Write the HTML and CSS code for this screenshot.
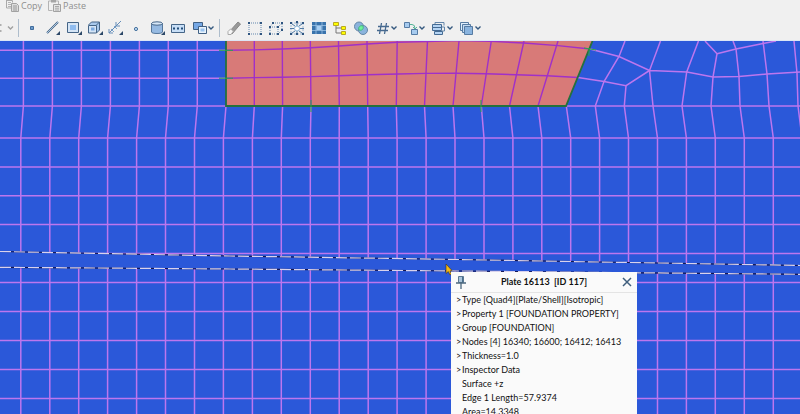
FILE: index.html
```
<!DOCTYPE html>
<html lang="en">
<head>
<meta charset="utf-8">
<title>Plate model</title>
<link rel="stylesheet" href="styles.css">
</head>
<body>
<header class="toolbar">
  <div class="clipboard">
    <button class="clip" type="button">
      <svg width="13" height="12" viewBox="0 0 13 12"><path d="M.5 0v8h5M.5.5h6v2" fill="none" stroke="#aaa"/><path d="M2 2.500h3M2 4.500h3M2 6.500h3" stroke="#b5b5b5"/><path d="M5.500 3.500h5l2 2v6h-7z" fill="#ddd" stroke="#a2a2a2"/><path d="M7 6h4M7 8h4M7 10h4" stroke="#999"/></svg>
      Copy</button>
    <button class="clip" type="button">
      <svg width="13" height="12" viewBox="0 0 13 12"><path d="M.5 1h10v3M.5 1v9.500h4" fill="none" stroke="#b4b4b4"/><path d="M3 0h5v2.500H3z" fill="#a6a6a6"/><path d="M5.500 4.500h7v7h-7z" fill="#e5e5e5" stroke="#a2a2a2"/><path d="M7 6.500h4M7 8.200h4M7 10h4" stroke="#aaa"/></svg>
      Paste</button>
  </div>
  <div class="tools">
    <button class="lead" type="button" aria-label="Undo history">
      <svg width="16" height="18" viewBox="0 0 16 18"><path d="M0 6h1.500M0 12h1.500" stroke="#999" stroke-width="1.500"/><path class="chev dim" d="M8 7.500l2.500 2.500L13 7.500"/></svg></button>
    <i class="sep"></i>
    <div class="group create">
      <button type="button" aria-label="Node"><svg viewBox="0 0 18 18"><path d="M7.500 7.500h3v3h-3z" fill="#6d9ccb" stroke="#416c9c"/></svg></button>
      <button type="button" aria-label="Beam"><svg viewBox="0 0 18 18"><path d="M3 14L14 3" stroke="#416184" stroke-width="2"/><path d="M3 14L14 3" stroke="#a9c5df"/><path class="corner" d="M16 12v4h-4z"/></svg></button>
      <button type="button" aria-label="Plate"><svg viewBox="0 0 18 18"><path d="M2.500 3.500h11v10h-11z" fill="#d5e5f6" stroke="#456587"/><path d="M5 6h6v5H5z" fill="#8fbcf0"/><path class="corner" d="M17 12v4h-4z"/></svg></button>
      <button type="button" aria-label="Brick"><svg viewBox="0 0 18 18"><path d="M2.500 6l3-3h8v8l-3 3" fill="#a9c9ec" stroke="#456587"/><path d="M2.500 6.500h8v7.500h-8z" fill="#d5e5f6" stroke="#456587"/><path d="M10.500 6l3-3" stroke="#456587"/><path d="M5 8.500h3.500v3H5z" fill="#7caae0"/><path class="corner" d="M17 12v4h-4z"/></svg></button>
      <button type="button" aria-label="Link"><svg viewBox="0 0 18 18"><path d="M3 14L13 4M3 10v4h4M10 3v4h4M13 4l2-2" fill="none" stroke="#648db9"/><path d="M5 10l3 3M8 7l3 3" stroke="#7da4ca"/><path class="corner" d="M17 12v4h-4z"/></svg></button>
      <button type="button" aria-label="Vertex"><svg viewBox="0 0 18 18"><circle cx="9" cy="10" r="1.600" fill="#bdd7f0" stroke="#46739f"/></svg></button>
      <button type="button" aria-label="Face"><svg viewBox="0 0 18 18"><path d="M3.500 4v9c0 2 11 2 11 0V4" fill="#96bae2" stroke="#55779b"/><ellipse cx="9" cy="4.500" rx="5.500" ry="1.700" fill="#d7e7f7" stroke="#456587"/><path class="corner" d="M17 12v4h-4z"/></svg></button>
      <button type="button" aria-label="Attributes"><svg viewBox="0 0 18 18"><path d="M2.500 5.500h13v8h-13z" fill="#c7def6" stroke="#456587"/><path d="M4 9.500h2M8 9.500h2M12 9.500h2" stroke="#234d79" stroke-width="2"/></svg></button>
    </div>
    <button class="split" type="button" aria-label="Copy elements">
      <svg width="16" height="18" viewBox="0 0 16 18"><path d="M1.500 3.500h9v7h-9z" fill="#76a8e5" stroke="#416184"/><path d="M6.500 7.500h8v7h-8z" fill="#e9f3fc" stroke="#416184"/><path d="M8.500 9.500h4v3h-4z" fill="#9bc4f1"/></svg><svg width="6" height="18" viewBox="0 0 6 18"><path class="chev" d="M.5 7.500L3 10l2.500-2.500"/></svg></button>
    <i class="sep"></i>
    <div class="group select">
      <button type="button" aria-label="Erase"><svg viewBox="0 0 18 18"><path d="M4 13l9-10 2.500 2-8.500 10z" fill="#999" stroke="#888"/><path d="M3 12.500l2.500-2.500 3 2-2.500 3.500H3z" fill="#f6f6f6" stroke="#aaa"/></svg></button>
      <button type="button" aria-label="Select by window"><svg viewBox="0 0 18 18"><path class="dots" d="M3 4h12M3 15h12M3 4v11M15 4v11"/><path class="knots" d="M3 4h0M15 4h0M3 15h0M15 15h0"/></svg></button>
      <button type="button" aria-label="Select by volume"><svg viewBox="0 0 18 18"><path class="dots" d="M3 8h8v7H3zM6 4h9v7M3 8l3-4M11 8l4-4M11 15l4-4"/><path class="knots" d="M3 8h0M11 8h0M3 15h0M11 15h0M6 4h0M15 4h0M15 11h0"/></svg></button>
      <button type="button" aria-label="Select connected"><svg viewBox="0 0 18 18"><path d="M3 4h12v11H3z" fill="none" stroke="#9eb9d5" stroke-dasharray="2 1"/><path d="M9 3v4M9 12v3M2 9.500h4M12 9.500h4M4 5l3 2M14 5l-3 2M4 14l3-2M14 14l-3-2" stroke="#527ba5"/><circle cx="9" cy="9.500" r="2.500" fill="#fff" stroke="#89b5d8"/><path class="knots" d="M3 4h0M15 4h0M3 15h0M15 15h0M9 3h0M9 15h0"/></svg></button>
      <button type="button" aria-label="Select all"><svg viewBox="0 0 18 18"><path d="M2 3h14v12H2z" fill="#3973ac"/><path d="M6 3v12M12 3v12M2 6.500h14M2 11.500h14" stroke="#9cc1e3" stroke-width=".8"/><path d="M6.500 7h5v4h-5z" fill="#a8cff2"/></svg></button>
      <button type="button" aria-label="Groups"><svg viewBox="0 0 18 18"><path d="M5 6v8h6M5 9h6" fill="none" stroke="#777"/><path d="M2.500 3.500h5v3h-5zM10.500 7.500h4v3h-4zM10.500 12.500h4v3h-4z" fill="#ff0" stroke="#b9a923"/></svg></button>
      <button type="button" aria-label="Intersection"><svg viewBox="0 0 18 18"><circle cx="7" cy="7.500" r="4.500" fill="#8bb4dd" stroke="#6688a8"/><circle cx="11" cy="11" r="4.500" fill="#8bb4dd" stroke="#6688a8"/><path d="M7 11c-1-3 1-5 4-4 1 3-1 5-4 4z" fill="#6ff39b" stroke="#49ba88"/></svg></button>
    </div>
    <div class="group splits">
      <button class="split" type="button" aria-label="Numbering"><svg width="16" height="18" viewBox="0 0 16 18"><path d="M6.500 4L4.500 15M11.500 4l-2 11M3 7.500h11M2 11.500h11" stroke="#46698f" stroke-width="1.300"/></svg><svg width="6" height="18" viewBox="0 0 6 18"><path class="chev" d="M.5 7.500L3 10l2.500-2.500"/></svg></button>
      <button class="split" type="button" aria-label="Transform"><svg width="16" height="18" viewBox="0 0 16 18"><path d="M1.500 3.500h5v5h-5zM8.500 10.500h6v5h-6z" fill="#a7cbef" stroke="#557ba4"/><path d="M7 5.500h2q3 0 3 4M10 8l2 2 2-2" fill="none" stroke="#55b497"/></svg><svg width="6" height="18" viewBox="0 0 6 18"><path class="chev" d="M.5 7.500L3 10l2.500-2.500"/></svg></button>
      <button class="split" type="button" aria-label="Arrange"><svg width="16" height="18" viewBox="0 0 16 18"><path d="M4 5V3.500h9v3M11 8h2.500v4H11" fill="none" stroke="#6386aa"/><path d="M1.500 5.500h9v3h-9zM1.500 8.500h9v3h-9zM3.500 12.500h8v3h-8z" fill="#b5d4f3" stroke="#456b93"/></svg><svg width="6" height="18" viewBox="0 0 6 18"><path class="chev" d="M.5 7.500L3 10l2.500-2.500"/></svg></button>
      <button class="split" type="button" aria-label="Layers"><svg width="16" height="18" viewBox="0 0 16 18"><path d="M1.500 3.500h8v8h-8z" fill="#e1effc" stroke="#567ba2"/><path d="M3.500 5.500h8v8h-8z" fill="#c5dcf3" stroke="#567ba2"/><path d="M5.500 7.500h8v8h-8z" fill="#8ab4df" stroke="#567ba2"/></svg><svg width="6" height="18" viewBox="0 0 6 18"><path class="chev" d="M.5 7.500L3 10l2.500-2.500"/></svg></button>
    </div>
  </div>
</header>
<main class="scene">
  <svg class="mesh" viewBox="0 41 800 373" preserveAspectRatio="xMinYMin slice">
    <path class="plate" d="M226 41V106H566L592.500 41Z"/>
    <g class="grid">
      <path d="M0 50.300H226M0 78.200H226M0 106H226M566 106H800M0 138H800M0 167H800M0 195.700H800M0 224.500H800M0 253.500H800M0 282.400H800M0 311.400H800M0 340.400H800M0 369.400H800M0 398.400H800"/>
      <path d="M23.400 41V106L20.800 138V414M52.400 41V106L49.800 138V414M81.400 41V106L78.700 138V414M110.400 41V106L107.600 138V414M139.400 41V106L136.600 138V414M168.300 41V106L165.500 138V414M197.300 41V106L194.500 138V414M226 106L223.400 138V414"/>
      <path d="M254.300 106L252.400 138V414M282.600 106L281.300 138V414M311 106L310.300 138V414M339.300 106L339.200 138V414M367.700 106L368.200 138V414M396.300 106L397.100 138V414M424.500 106L426.100 138V414M453 106L455 138V414M481.300 106L484 138V414M509.500 106L512.900 138V414M538 106L541.800 138V414M566.300 106L570.700 138V414"/>
      <path d="M625 41L619 56.500L604 81.500L595.300 106L599.600 138V414M626 85.700L624.300 106L628.500 138V414M660.500 41L649.500 70.500L653 106L657.500 138V414M698.500 41L686.700 72L682 106L686.400 138V414M705 41L717 53.700L713 77L711 106L715.300 138V414M733 41L736 49L739 76.500L740 106L744.300 138V414M763 41L767 74L769 106L773.300 138V414M794 41L797 73L798 106L802 138"/>
      <path d="M590 49L619 56.500L649.500 70.500L687 72L713 77L739 76.500L767 74L800 72M578 77.500L604 81.500L626 85.700L649.500 70.500M717 53.700L736 49L763 43.500L776 41"/>
    </g>
    <g class="inner">
      <path d="M254.300 41V106M282.300 41L282.600 106M310.300 41L311 106M338.500 41L339.300 106M367 41L367.700 106M397.200 41L396.300 106M427.500 41L424.500 106M459 41L453 106M491.300 41L481.300 106M524 41L509.500 106M558 41L538 106"/>
      <path d="M226 50.300L254 49.900L282 49L311 47.700L339 46L367 44L397 42.300L427 41.500L459 40.600L491 41.300L524 43L558 45.600L590 49M226 78.200L254 77.600L282 77.300L311 76.600L339 75.800L367 74.700L398 74L426 73.400L456 73.300L486 73.700L516 74.700L547 75.700L578 77.500"/>
    </g>
    <path class="edge" d="M226 41V106H566L592.500 41"/>
    <path class="ticks" d="M219 50.300H233M219 78.200H233M311 100V112M481 100V112M584 48L596 50M589 48V56"/>
    <path class="band" d="M0 251.500L230 256L460 259.500L600 262L800 265.500V274.300L640 272.800L460 271L230 269L0 267.300Z"/>
    <path class="cut" d="M0 251.500L230 256L460 259.500L600 262L800 265.500M0 267.300L230 269L460 271L640 272.800L800 274.300"/>
    <path class="cut dash" d="M0 251.500L230 256L460 259.500L600 262L800 265.500M0 267.300L230 269L460 271L640 272.800L800 274.300"/>
    <path class="cursor" d="M446 264V273.500L448.300 271.500L450 275L451.500 274L450 271L452 270.500Z"/>
  </svg>
  <section class="popup" aria-labelledby="popup-title">
    <div class="popup-head">
      <button type="button" aria-label="Pin"><svg width="10" height="14" viewBox="0 0 10 14"><path d="M2.500 1.500h5v6h-5z" fill="#a9c4da" stroke="#5b7891"/><path d="M0 8h10M5 8v6" stroke="#4c687f" stroke-width="1.300"/><path d="M6.500 2v5" stroke="#49708e"/></svg></button>
      <h1 id="popup-title">Plate 16113 &nbsp;[ID 117]</h1>
      <button type="button" aria-label="Close"><svg width="10" height="10" viewBox="0 0 10 10"><path d="M1 1l8 8M9 1L1 9" stroke="#3f5e7d" stroke-width="1.500"/></svg></button>
    </div>
    <ul class="props">
      <li><button type="button"><span>&gt;</span>Type [Quad4][Plate/Shell][Isotropic]</button></li>
      <li><button type="button"><span>&gt;</span>Property 1 [FOUNDATION PROPERTY]</button></li>
      <li><button type="button"><span>&gt;</span>Group [FOUNDATION]</button></li>
      <li><button type="button"><span>&gt;</span>Nodes [4] 16340; 16600; 16412; 16413</button></li>
      <li><button type="button"><span>&gt;</span>Thickness=1.0</button></li>
      <li><button type="button"><span>&gt;</span>Inspector Data</button></li>
      <li class="leaf">Surface +z</li>
      <li class="leaf">Edge 1 Length=57.9374</li>
      <li class="leaf">Area=14.3348</li>
    </ul>
  </section>
</main>
</body>
</html>
```
FILE: styles.css
```
* { box-sizing: border-box; }
body {
  margin: 0;
  height: 100vh;
  display: flex;
  flex-direction: column;
  overflow: hidden;
  background: #f0f0f0;
  font-family: Lato, "Liberation Sans", sans-serif;
}
button {
  margin: 0;
  padding: 0;
  border: 0;
  background: none;
  color: inherit;
  font: inherit;
}
svg { display: block; flex: none; fill: none; }

.toolbar { border-bottom: 1px solid #dce6f5; }
.clipboard { display: flex; gap: 6px; height: 12px; padding-left: 6px; }
.clip {
  display: flex;
  align-items: center;
  gap: 2px;
  color: #8e8e8e;
  font: 9px/12px "Open Sans", sans-serif;
}
.tools { display: flex; align-items: center; height: 28px; padding-top: 4px; }
.lead { width: 18px; }
.sep { width: 1px; height: 18px; background: #aebdcc; }
.group { display: grid; align-items: center; }
.group button { display: flex; justify-content: center; }
.create { grid-template-columns: repeat(8, 1fr); width: 166px; margin-left: 3px; }
.select { grid-template-columns: repeat(7, 1fr); width: 149px; margin-left: 3px; }
.create svg, .select svg { width: 18px; height: 18px; }
.split { display: flex; align-items: center; }
.tools > .split { margin: 0 5px 0 4px; }
.splits { grid-template-columns: repeat(4, 28px); margin-left: 3px; }
.splits .split { justify-content: flex-start; }
.chev { stroke: #35597f; stroke-width: 1.4; }
.chev.dim { stroke: #a0a0a0; }
.corner { fill: #2c4868; }
.dots { stroke: #6387ae; stroke-dasharray: 1 1; }
.knots { stroke: #2f5580; stroke-width: 2; stroke-linecap: square; }

.scene { position: relative; flex: 1; min-height: 0; overflow: hidden; background: #2b58d9; }
.mesh { width: 100%; height: 100%; }
.plate { fill: #d87a78; }
.grid { stroke: #bd76ee; stroke-width: 1.5; }
.inner { stroke: #a030c8; stroke-width: 1.4; }
.edge { stroke: #24713d; stroke-width: 1.8; }
.ticks { stroke: #25a84b; }
.band { fill: #2b58d9; }
.cut { stroke: #16164e; stroke-width: 1.2; }
.cut.dash { stroke: #d9d2ec; stroke-dasharray: 11 3; }
.cursor { fill: #f5b915; stroke: #3c3020; stroke-width: 0.6; }

.popup {
  position: absolute;
  left: 451px;
  top: 231px;
  width: 186px;
  background: #fafafa;
  color: #111;
}
.popup-head {
  display: flex;
  align-items: center;
  justify-content: space-between;
  height: 21px;
  padding: 0 5px;
  border-bottom: 1px solid #e4e4e4;
}
.popup-head h1 { margin: 0; font-size: 9px; line-height: 14px; font-weight: 700; }
.props { margin: 0; padding: 0 0 4px 4px; list-style: none; font-size: 9px; line-height: 14px; white-space: nowrap; }
.props li { height: 14px; }
.props button { display: flex; }
.props span { width: 7px; }
.leaf { padding-left: 7px; }
```
